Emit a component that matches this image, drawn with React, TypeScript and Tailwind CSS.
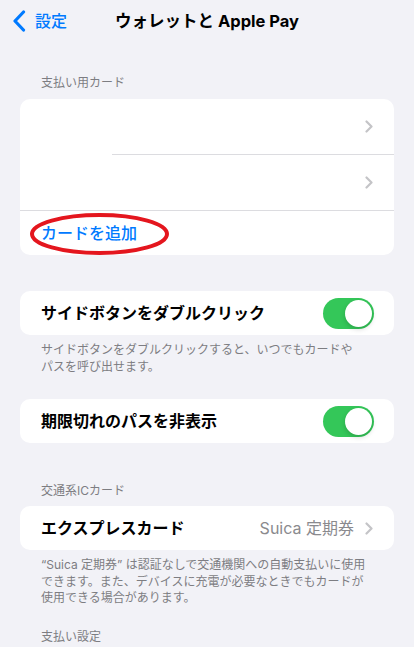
import React from 'react';

// ── small pieces ──
function Chevron() {
  return (
    <svg width="8" height="13" viewBox="0 0 8 13" fill="none" className="shrink-0">
      <path d="M1.5 1.5L6.5 6.5L1.5 11.5" stroke="#c4c4c7" strokeWidth="2.2" strokeLinecap="round" strokeLinejoin="round" />
    </svg>
  );
}

function Toggle({ on = true }: { on?: boolean }) {
  return (
    <div className={`relative w-[51px] h-[31px] rounded-full shrink-0 ${on ? 'bg-[#34c759]' : 'bg-[#e9e9eb]'}`}>
      <div className={`absolute top-[2px] w-[27px] h-[27px] rounded-full bg-white shadow-[0_2px_5px_rgba(0,0,0,0.18)] ${on ? 'right-[2px]' : 'left-[2px]'}`} />
    </div>
  );
}

function SectionHeader({ children }: { children: React.ReactNode }) {
  return <div className="px-[41px] text-[12px] leading-[16px] text-[#7d7d82]">{children}</div>;
}

function Footer({ children }: { children: React.ReactNode }) {
  return <div className="px-[41px] text-[12px] leading-[16.5px] text-[#7d7d82] whitespace-nowrap">{children}</div>;
}

function ToggleRow({ label }: { label: string }) {
  return (
    <div className="mx-[20px] bg-white rounded-[10px] h-[44px] flex items-center pl-[21px] pr-[20px]">
      <span className="flex-1 text-[16px] font-semibold text-black">{label}</span>
      <Toggle />
    </div>
  );
}

export default function App() {
  return (
    <div className="min-h-[647px] bg-[#f2f2f7] font-['Inter','Noto_Sans_CJK_JP',sans-serif] overflow-hidden">
      {/* Nav bar */}
      <div className="relative h-[42px] flex items-center justify-center">
        <div className="absolute left-[12px] top-0 h-full flex items-center gap-[9px] text-[#007aff]">
          <svg width="14" height="22" viewBox="0 0 14 22" fill="none">
            <path d="M11.5 2L3 11L11.5 20" stroke="#007aff" strokeWidth="3.2" strokeLinecap="round" strokeLinejoin="round" />
          </svg>
          <span className="text-[16px] font-medium leading-none">設定</span>
        </div>
        <span className="text-[16.5px] font-bold text-black leading-none">ウォレットと Apple Pay</span>
      </div>

      <div className="pt-[33px]">
        <SectionHeader>支払い用カード</SectionHeader>

        {/* Payment cards */}
        <div className="mt-[8px] mx-[20px] bg-white rounded-[10px] overflow-visible">
          <div className="h-[55px] flex items-center justify-end pr-[21px]">
            <Chevron />
          </div>
          <div className="ml-[92px] h-px bg-[#dcdce0]" />
          <div className="h-[55px] flex items-center justify-end pr-[21px]">
            <Chevron />
          </div>
          <div className="h-px bg-[#dcdce0]" />
          <div className="relative h-[44px] flex items-center pl-[21px]">
            <span className="text-[16px] font-medium text-[#007aff]">カードを追加</span>
            {/* red annotation ring */}
            <svg className="absolute left-[10px] top-[2px] overflow-visible" width="140" height="42" viewBox="0 0 140 42" fill="none">
              <ellipse cx="69.5" cy="21" rx="67.5" ry="19" stroke="#e4161e" strokeWidth="4" />
            </svg>
          </div>
        </div>

        <div className="mt-[36px]">
          <ToggleRow label="サイドボタンをダブルクリック" />
        </div>
        <div className="mt-[7px]">
          <Footer>
            サイドボタンをダブルクリックすると、いつでもカードや
            <br />
            パスを呼び出せます。
          </Footer>
        </div>

        <div className="mt-[24px]">
          <ToggleRow label="期限切れのパスを非表示" />
        </div>

        <div className="mt-[40px]">
          <SectionHeader>交通系ICカード</SectionHeader>
        </div>
        <div className="mt-[7px] mx-[20px] bg-white rounded-[10px] h-[44px] flex items-center pl-[21px] pr-[21px]">
          <span className="flex-1 text-[16px] font-semibold text-black">エクスプレスカード</span>
          <span className="text-[16px] text-[#8a8a8e] mr-[11px]">Suica 定期券</span>
          <Chevron />
        </div>
        <div className="mt-[7px]">
          <Footer>
            “Suica 定期券” は認証なしで交通機関への自動支払いに使用
            <br />
            できます。また、デバイスに充電が必要なときでもカードが
            <br />
            使用できる場合があります。
          </Footer>
        </div>

        <div className="mt-[22px]">
          <SectionHeader>支払い設定</SectionHeader>
        </div>
      </div>
    </div>
  );
}
